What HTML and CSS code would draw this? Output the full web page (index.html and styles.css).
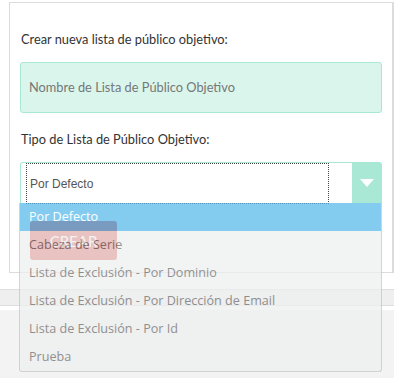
FILE: index.html
```html
<!DOCTYPE html>
<html lang="es">
<head>
    <meta charset="UTF-8">
    <meta name="viewport" content="width=device-width, initial-scale=1.0">
    <title>Público Objetivo</title>
    <link rel="stylesheet" href="styles.css">
</head>
<body>
    <div class="card">
        <label class="field-label">Crear nueva lista de público objetivo:</label>
        <div class="name-input">Nombre de Lista de Público Objetivo</div>

        <label class="field-label">Tipo de Lista de Público Objetivo:</label>
        <div class="select-wrap">
            <div class="select-box">
                <span class="select-value">Por Defecto</span>
                <span class="select-arrow"></span>
            </div>
            <ul class="select-menu">
                <li class="selected">Por Defecto</li>
                <li>Cabeza de Serie</li>
                <li>Lista de Exclusión - Por Dominio</li>
                <li>Lista de Exclusión - Por Dirección de Email</li>
                <li>Lista de Exclusión - Por Id</li>
                <li>Prueba</li>
            </ul>
        </div>

        <button class="create-btn">CREAR</button>
    </div>

    <div class="band"></div>
    <div class="bottom"></div>
</body>
</html>
```

FILE: styles.css
```css
body {
    margin: 0;
    background: #fff;
    font-family: Lato, "Liberation Sans", sans-serif;
    color: #333;
}
.card {
    margin: 2px 0 0 9px;
    border: 1px solid #dcdcdc;
    border-right-width: 2px;
    padding: 28px 10px 14px 10px;
    height: 227px;
}
.field-label {
    display: block;
    font-size: 12.8px;
    margin-left: 1px;
    margin-bottom: 15px;
}
.name-input {
    height: 49px;
    line-height: 49px;
    background: #d9f5ec;
    border: 1px solid #a8e8d4;
    border-radius: 3px;
    padding-left: 8px;
    font-size: 12.8px;
    color: #777;
    margin-bottom: 18px;
}
.select-wrap {
    position: relative;
}
.select-box {
    display: flex;
    height: 40px;
    border: 1px solid #a8e8d4;
    border-bottom: none;
    border-radius: 3px 3px 0 0;
    background: #fff;
    margin-top: 11px;
}
.select-value {
    width: 303px;
    margin-left: 5px;
    border: 1px dotted #444;
    font-family: "Liberation Sans", Arial, sans-serif;
    font-size: 12px;
    color: #555;
    line-height: 40px;
    padding-left: 3px;
    box-sizing: border-box;
    height: 41px;
}
.select-arrow {
    margin-left: auto;
    width: 29px;
    background: #a8e8d4;
    display: flex;
    align-items: center;
    justify-content: center;
}
.select-arrow::after {
    content: "";
    border-left: 7px solid transparent;
    border-right: 7px solid transparent;
    border-top: 8px solid #fff;
}
.select-menu {
    position: absolute;
    top: 41px;
    left: -1px;
    right: 0;
    margin: 0;
    padding: 0;
    list-style: none;
    background: #eeefef;
    border: 1px solid #c4c4c4;
    border-top: none;
    border-radius: 0 0 3px 3px;
    opacity: 0.72;
    z-index: 2;
    font-family: "Open Sans", sans-serif;
    font-size: 12.6px;
    color: #6a6a6a;
}
.select-menu li {
    height: 28px;
    line-height: 28px;
    padding-left: 9px;
}
.select-menu li.selected {
    background: #54b8ea;
    color: #fff;
}
.create-btn {
    display: block;
    margin: 18px 0 0 10px;
    width: 87px;
    height: 39px;
    border: none;
    border-radius: 3px;
    background: #d9534f;
    color: #fff;
    font-family: Lato, sans-serif;
    font-size: 15px;
}
.band {
    margin-top: 16px;
    height: 15px;
    background: #efefef;
    border-top: 1px solid #dedede;
    border-bottom: 1px solid #dedede;
}
.bottom {
    margin-top: 4px;
    height: 80px;
    background: #f3f3f4;
}
```
